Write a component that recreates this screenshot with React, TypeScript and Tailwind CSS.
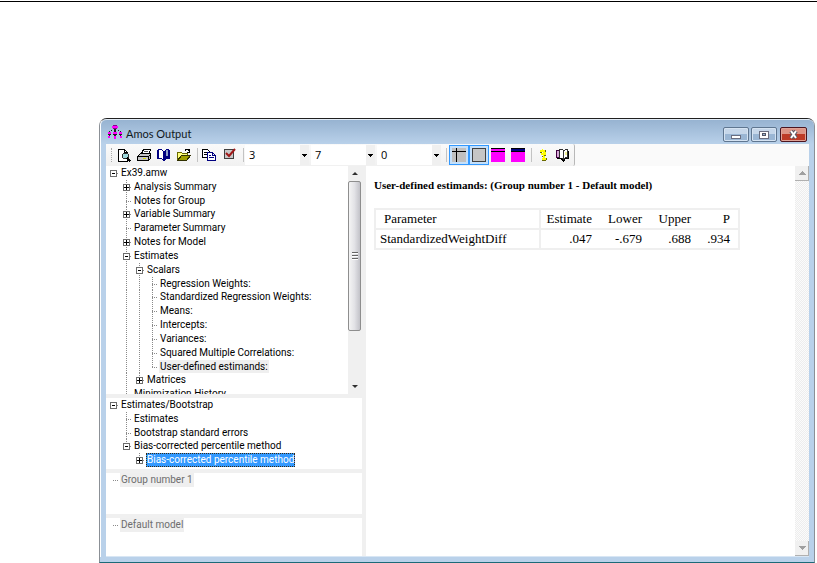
import { ReactNode } from 'react';

interface TreeItem {
  label: string;
  expander?: 'plus' | 'minus';
  state?: 'marked' | 'selected' | 'disabled';
  children?: TreeItem[];
}

interface TreeRow {
  item: TreeItem;
  depth: number;
  // one entry per ancestor level, true when the vertical guide runs through
  guides: boolean[];
  last: boolean;
}

const resultTree: TreeItem[] = [
  {
    label: 'Ex39.amw',
    expander: 'minus',
    children: [
      { label: 'Analysis Summary', expander: 'plus' },
      { label: 'Notes for Group' },
      { label: 'Variable Summary', expander: 'plus' },
      { label: 'Parameter Summary' },
      { label: 'Notes for Model', expander: 'plus' },
      {
        label: 'Estimates',
        expander: 'minus',
        children: [
          {
            label: 'Scalars',
            expander: 'minus',
            children: [
              { label: 'Regression Weights:' },
              { label: 'Standardized Regression Weights:' },
              { label: 'Means:' },
              { label: 'Intercepts:' },
              { label: 'Variances:' },
              { label: 'Squared Multiple Correlations:' },
              { label: 'User-defined estimands:', state: 'marked' },
            ],
          },
          { label: 'Matrices', expander: 'plus' },
        ],
      },
      { label: 'Minimization History' },
    ],
  },
];

const bootstrapTree: TreeItem[] = [
  {
    label: 'Estimates/Bootstrap',
    expander: 'minus',
    children: [
      { label: 'Estimates' },
      { label: 'Bootstrap standard errors' },
      {
        label: 'Bias-corrected percentile method',
        expander: 'minus',
        children: [
          { label: 'Bias-corrected percentile method', expander: 'plus', state: 'selected' },
        ],
      },
    ],
  },
];

const estimands = [
  { name: 'StandardizedWeightDiff', estimate: '.047', lower: '-.679', upper: '.688', p: '.934' },
];

const labelStyles = {
  normal: 'text-black',
  marked: 'bg-[#efefef] text-black',
  selected: 'bg-[#3399ff] text-white outline-1 -outline-offset-1 outline-dotted outline-[#3a2a10]',
  disabled: 'bg-[#efefef] text-[#6d6d6d]',
};

function flatten(items: TreeItem[], depth = 0, guides: boolean[] = []): TreeRow[] {
  return items.flatMap((item, i) => {
    const last = i === items.length - 1;
    return [
      { item, depth, guides, last },
      ...flatten(item.children ?? [], depth + 1, [...guides, depth > 0 && !last]),
    ];
  });
}

function Guide({ through }: { through: boolean }) {
  return (
    <svg width="13" height="14" shapeRendering="crispEdges" className="shrink-0" aria-hidden="true">
      {through && <path d="M6.5 0V14" stroke="#8a8a8a" strokeDasharray="1 1" />}
    </svg>
  );
}

function Joint({ row }: { row: TreeRow }) {
  const { item, depth, last } = row;
  return (
    <svg width="13" height="14" shapeRendering="crispEdges" className="shrink-0" aria-hidden="true">
      {depth > 0 && (
        <path d={last ? 'M6.5 0V7' : 'M6.5 0V14'} stroke="#8a8a8a" strokeDasharray="1 1" />
      )}
      <path d="M6 7.5H12" stroke="#8a8a8a" strokeDasharray="1 1" />
      {item.expander && (
        <>
          <rect x="3.5" y="4.5" width="6" height="6" fill="#fff" stroke="#6e6e6e" />
          <path d="M5 7.5H8" stroke="#000" />
        </>
      )}
      {item.expander === 'plus' && <path d="M4 7.5H9M6.5 5V10" stroke="#000" />}
    </svg>
  );
}

function Tree({ items, className }: { items: TreeItem[]; className: string }) {
  return (
    <ul
      className={`grid auto-rows-fr pl-px font-['Roboto','Liberation_Sans',sans-serif] text-[10px] leading-[14px] ${className}`}
    >
      {flatten(items).map((row, i) => (
        <li key={i} className="flex min-h-0">
          {row.guides.map((through, g) => (
            <Guide key={g} through={through} />
          ))}
          <Joint row={row} />
          <span className={`px-px whitespace-nowrap ${labelStyles[row.item.state ?? 'normal']}`}>
            {row.item.label}
          </span>
        </li>
      ))}
    </ul>
  );
}

function Arrow({ up = false, color }: { up?: boolean; color: string }) {
  return (
    <svg width="8" height="4" shapeRendering="crispEdges" aria-hidden="true">
      <path d={up ? 'M0 4L4 0L8 4Z' : 'M0 0H8L4 4Z'} fill={color} />
    </svg>
  );
}

function SmallArrow({ up = false }: { up?: boolean }) {
  return (
    <svg width="6" height="3" viewBox="0 0 6 3" aria-hidden="true">
      <path d={up ? 'M0 3L3 0L6 3Z' : 'M0 0H6L3 3Z'} fill="#303030" />
    </svg>
  );
}

function TreeScrollbar() {
  return (
    <div className="flex w-[14px] shrink-0 flex-col bg-[#f0f0f0]">
      <button aria-label="Scroll up" className="flex h-[15px] items-center justify-center">
        <SmallArrow up />
      </button>
      <div className="mr-px flex h-[150px] flex-col items-center justify-center gap-px rounded-xs border border-[#8e8e8e] bg-linear-to-r from-[#f4f4f4] via-[#e2e2e6] to-[#c2c2c8]">
        <span className="h-[2px] w-[6px] border-t border-[#666] bg-white" />
        <span className="h-[2px] w-[6px] border-t border-[#666] bg-white" />
        <span className="h-[2px] w-[6px] border-t border-[#666] bg-white" />
      </div>
      <button aria-label="Scroll down" className="mt-auto flex h-[15px] items-center justify-center">
        <SmallArrow />
      </button>
    </div>
  );
}

function OutputScrollbar() {
  return (
    <div className="flex w-[14px] shrink-0 flex-col bg-[#f4f4f4]">
      <button
        aria-label="Scroll up"
        className="flex h-[15px] items-center justify-center border-r border-b border-[#b0b0b0] bg-[#f0f0f0]"
      >
        <Arrow up color="#a0a0a0" />
      </button>
      <div className="flex-1 bg-[repeating-conic-gradient(#ededed_0_25%,#fbfbfb_0_50%)] bg-size-[2px_2px]" />
      <button
        aria-label="Scroll down"
        className="flex h-[15px] items-center justify-center border-r border-b border-[#b0b0b0] bg-[#f0f0f0]"
      >
        <Arrow color="#a0a0a0" />
      </button>
    </div>
  );
}

function ToolButton({ label, children }: { label: string; children: ReactNode }) {
  return (
    <button aria-label={label} className="flex h-5 w-5 shrink-0 items-center justify-center">
      <svg width="16" height="16" viewBox="0 0 16 16" shapeRendering="crispEdges" fill="none">
        {children}
      </svg>
    </button>
  );
}

function ToggleButton({ label, children }: { label: string; children: ReactNode }) {
  return (
    <button
      aria-label={label}
      aria-pressed="true"
      className="flex h-5 w-5 shrink-0 items-center justify-center border border-[#3399ff] bg-[#c4e0fb]"
    >
      <svg width="16" height="16" viewBox="0 0 16 16" shapeRendering="crispEdges" fill="none">
        {children}
      </svg>
    </button>
  );
}

function Separator() {
  return <span className="h-[14px] w-px shrink-0 bg-[#c3c3c3]" />;
}

function DigitSelect({ label, value }: { label: string; value: string }) {
  return (
    <div className="relative h-5 w-16 shrink-0 bg-white">
      <select
        aria-label={label}
        defaultValue={value}
        className="block h-5 w-full appearance-none pl-1 font-['Open_Sans','Noto_Sans',sans-serif] text-[11px] leading-5 text-black"
      >
        <option>{value}</option>
      </select>
      <span className="pointer-events-none absolute inset-y-0 right-0 flex w-[9px] items-center justify-center bg-[#f0f0f0]">
        <svg width="5" height="3" shapeRendering="crispEdges" aria-hidden="true">
          <path d="M0 0H5V1H0ZM1 1H4V2H1ZM2 2H3V3H2Z" fill="#000" />
        </svg>
      </span>
    </div>
  );
}

function AmosIcon() {
  return (
    <svg width="14" height="14" viewBox="0 0 14 14" shapeRendering="crispEdges" aria-hidden="true">
      <path d="M5 0H9V1H10V3H9V4H5V3H4V1H5Z" fill="#ff00ff" />
      <path d="M5 0H9V1H5ZM5 3H9V4H5Z" fill="#8a008a" />
      <path d="M6 4H8V7H6ZM3 5H4V6H3ZM10 5H11V6H10ZM1 6H2V7H1ZM12 6H13V7H12Z" fill="#202020" />
      <path d="M0 7H3V9H0ZM5 7H9V9H5ZM11 7H14V9H11Z" fill="#ff00ff" />
      <path d="M0 9H3V10H0ZM5 9H9V10H5ZM11 9H14V10H11ZM1 10H2V11H1ZM6 10H8V11H6ZM12 10H13V11H12Z" fill="#202020" />
      <path d="M0 11H2V13H0ZM6 11H8V14H6ZM12 11H14V13H12Z" fill="#ff00ff" />
    </svg>
  );
}

function TitleBar() {
  return (
    <header className="flex h-[25px] items-center rounded-t-md border-t border-white/60 bg-linear-to-b from-[#97b3d1] to-[#b9d1ea] px-[7px]">
      <AmosIcon />
      <h1 className="ml-1 pt-1 font-['Lato','Open_Sans',sans-serif] text-[11px] leading-[16px] text-[#101820]">
        Amos Output
      </h1>
      <div className="ml-auto flex gap-[2px] pt-[5px]">
        <button
          aria-label="Minimize"
          className="flex h-[15px] w-[26px] items-center justify-center rounded-xs border border-[#5f7690] bg-linear-to-b from-[#c6d7ea] from-50% to-[#9ab6d4] to-50% shadow-[inset_0_0_0_1px_#d5e3f2]"
        >
          <svg width="10" height="4" shapeRendering="crispEdges" className="mt-1">
            <rect x="0.5" y="0.5" width="9" height="3" fill="#fff" stroke="#6a6e80" />
          </svg>
        </button>
        <button
          aria-label="Maximize"
          className="flex h-[15px] w-[26px] items-center justify-center rounded-xs border border-[#5f7690] bg-linear-to-b from-[#c6d7ea] from-50% to-[#9ab6d4] to-50% shadow-[inset_0_0_0_1px_#d5e3f2]"
        >
          <svg width="10" height="8" shapeRendering="crispEdges">
            <rect x="0.5" y="0.5" width="9" height="7" fill="#fff" stroke="#6a6e80" />
            <rect x="3.5" y="2.5" width="3" height="2" fill="#9ab6d4" stroke="#535666" />
          </svg>
        </button>
        <button
          aria-label="Close"
          className="ml-px flex h-[15px] w-[27px] items-center justify-center rounded-xs border border-[#4b1520] bg-linear-to-b from-[#dd9486] from-50% to-[#bd3a26] to-50% shadow-[inset_0_0_0_1px_#e0a296]"
        >
          <svg width="11" height="9" viewBox="0 0 11 9">
            <path d="M3 1L8 8M8 1L3 8" stroke="#5d5a65" strokeWidth="4" />
            <path d="M3 1L8 8M8 1L3 8" stroke="#fff" strokeWidth="2" />
          </svg>
        </button>
      </div>
    </header>
  );
}

function Toolbar() {
  return (
    <div className="flex h-[22px] items-center bg-[#fafafa]">
      <div className="flex h-full items-center rounded-r-xs border-r border-[#b8b8b8] bg-linear-to-b from-[#fafafa] to-[#f1f1f1]">
        <span className="ml-[5px] h-[14px] border-l border-dotted border-[#aaa]" />
        <div className="ml-[2px] flex">
          <ToolButton label="Print preview">
            <path d="M2.5 2.5H8.5L11.5 5.5V14.5H2.5Z" fill="#fff" stroke="#000" />
            <path d="M8.5 2.5V5.5H11.5" stroke="#000" />
            <circle cx="9.5" cy="9" r="3" fill="#9fd8dc" stroke="#303030" />
            <path d="M11 11L14.5 14.5" stroke="#000" strokeWidth="2" />
          </ToolButton>
          <ToolButton label="Print">
            <path d="M5.5 6.5L7.5 2.5H14.5L12.5 7.5" fill="#fff" stroke="#000" />
            <path d="M8 4.5H12M7 6.5H11" stroke="#555" />
            <path d="M1.5 9.5L4.5 6.5H14.5V11.5L12.5 13.5H1.5Z" fill="#c6c6c6" stroke="#000" />
            <path d="M2 9.5H12.5V13M12.5 9.5L14.5 7.5" stroke="#000" />
            <path d="M7 11.5H10" stroke="#d8d800" />
            <path d="M3 13.5H12" stroke="#000" />
          </ToolButton>
          <ToolButton label="Contents">
            <path d="M1 3H2V2H6V3H7V4H9V3H10V2H13V3H14V12H10V13H9V14H7V13H6V12H1Z" fill="#000080" />
            <path d="M3 3H6V4H7V12H6V11H3Z" fill="#fff" />
            <path d="M10 3H12V9H10Z" fill="#8fa0c8" />
          </ToolButton>
          <ToolButton label="Open">
            <path d="M1.5 13.5V5.5H5.5L6.5 6.5H11.5V8.5" fill="#ffff80" stroke="#6b6b00" />
            <path d="M1.5 13.5L5.5 8.5H14.5L10.5 13.5Z" fill="#a0a000" stroke="#303000" />
            <path d="M9 3.5V2.5H12V3.5H13V4.5M13.5 2V6M11 5.5H14" stroke="#000" />
          </ToolButton>
        </div>
        <span className="w-[3px]" />
        <Separator />
        <div className="ml-px flex gap-[2px]">
          <ToolButton label="Copy">
            <path d="M1.5 2.5H6.5L8.5 4.5V10.5H1.5Z" fill="#fff" stroke="#000" />
            <path d="M3 5.5H6M3 7.5H7" stroke="#000" />
            <path d="M6.5 5.5H11.5L14.5 8.5V13.5H6.5Z" fill="#fff" stroke="#000080" />
            <path d="M11.5 5.5V8.5H14.5M8 8.5H10M8 10.5H13" stroke="#000080" />
          </ToolButton>
          <ToolButton label="Options">
            <path d="M1.5 2.5H10.5V11.5H1.5Z" fill="#c8c8c8" stroke="#404040" />
            <path d="M3 6L6 9L12 2" stroke="#a01818" strokeWidth="2" shapeRendering="auto" />
          </ToolButton>
        </div>
        <span className="w-[2px]" />
        <Separator />
        <div className="ml-px flex gap-[2px]">
          <DigitSelect label="Decimal places" value="3" />
          <DigitSelect label="Column width" value="7" />
          <DigitSelect label="Column spacing" value="0" />
        </div>
        <span className="w-[5px]" />
        <Separator />
        <div className="ml-[2px] flex">
          <ToggleButton label="Table rules">
            <path d="M1 1H15V15H1Z" fill="#c0c0c0" />
            <path d="M1 4.5H15M5.5 1V15" stroke="#000" />
          </ToggleButton>
          <ToggleButton label="Table border">
            <path d="M1.5 1.5H14.5V14.5H1.5Z" fill="#c6c6c6" stroke="#404040" />
          </ToggleButton>
          <ToolButton label="Table color">
            <path d="M0 1H14V15H0Z" fill="#ff00ff" />
            <path d="M0 1.5H14M0 4.5H14" stroke="#000" />
          </ToolButton>
          <ToolButton label="Header color">
            <path d="M0 1H14V15H0Z" fill="#ff00ff" />
            <path d="M0 2H14V4H0Z" fill="#000080" />
            <path d="M0 1.5H14M0 4.5H14" stroke="#000" />
          </ToolButton>
        </div>
        <span className="w-[2px]" />
        <Separator />
        <div className="ml-px flex">
          <ToolButton label="Help">
            <path d="M7 2H8V3H10V5H11V8H9V9H10V11H11V13H7V11H8V8H6V6H8V5H5V3H7Z" fill="#ffff00" />
            <path d="M5 5H7V6H5ZM10 3H11V5H10ZM9 8H11V9H9ZM7 9H8V10H7ZM11 11H12V13H11ZM7 13H11V14H7Z" fill="#6a6a00" />
          </ToolButton>
          <ToolButton label="Help topics">
            <path d="M1.5 3.5H4.5V10.5H1.5Z" fill="#d9a8d9" stroke="#400040" />
            <path d="M4.5 2.5H7.5L8.5 3.5V12.5L7.5 11.5H4.5Z" fill="#fff" stroke="#303030" />
            <path d="M8.5 4.5L10.5 2.5H12.5V10.5H10.5L8.5 12.5Z" fill="#fff" stroke="#303030" />
            <path d="M2 11.5H6L8.5 14L10.5 11.5H14" stroke="#000" />
            <path d="M13.5 4V12" stroke="#000" />
            <path d="M10 5H12V8H10Z" fill="#f2f29a" />
          </ToolButton>
        </div>
        <span className="w-px" />
      </div>
    </div>
  );
}

function EstimandsTable() {
  return (
    <table className="mt-[15px] border-collapse border-2 border-[#efefef] text-[13px] leading-[18px]">
      <thead>
        <tr className="border-b-2 border-[#efefef]">
          <th className="w-[165px] border-r-2 border-[#efefef] pl-2 text-left font-normal">Parameter</th>
          <th className="w-[58px] pr-[6px] text-right font-normal">Estimate</th>
          <th className="w-[50px] pr-[6px] text-right font-normal">Lower</th>
          <th className="w-[49px] pr-[6px] text-right font-normal">Upper</th>
          <th className="w-[42px] pr-[8px] text-right font-normal">P</th>
        </tr>
      </thead>
      <tbody>
        {estimands.map((row) => (
          <tr key={row.name}>
            <td className="border-r-2 border-[#efefef] pl-1">{row.name}</td>
            <td className="pr-[6px] text-right">{row.estimate}</td>
            <td className="pr-[6px] text-right">{row.lower}</td>
            <td className="pr-[6px] text-right">{row.upper}</td>
            <td className="pr-[8px] text-right">{row.p}</td>
          </tr>
        ))}
      </tbody>
    </table>
  );
}

export default function App() {
  return (
    <main className="bg-white pt-px">
      <hr className="border-t border-black" />
      <div className="pt-[116px] pr-[2px] pl-[99px]">
        <section className="rounded-t-lg border-x border-t border-b border-x-[#8b9096] border-t-[#202020] border-b-[#1c6a78] bg-[#b9d1ea]">
          <div className="rounded-t-md border-l border-white">
            <TitleBar />
            <div className="mx-[5px] mb-[5px] border-b border-[#d8e6f4]">
              <Toolbar />
              <div className="flex gap-1 bg-[#f0f0f0]">
                <div className="flex w-[256px] shrink-0 flex-col gap-1">
                  <nav className="flex h-[228px] overflow-hidden bg-white">
                    <Tree items={resultTree} className="h-[235px] flex-1" />
                    <TreeScrollbar />
                  </nav>
                  <nav className="h-[71px] bg-white">
                    <Tree items={bootstrapTree} className="h-[69px]" />
                  </nav>
                  <nav className="h-[41px] bg-white">
                    <Tree items={[{ label: 'Group number 1', state: 'disabled' }]} className="h-[14px]" />
                  </nav>
                  <nav className="h-[38px] bg-white">
                    <Tree items={[{ label: 'Default model', state: 'disabled' }]} className="h-[14px]" />
                  </nav>
                </div>
                <div className="flex min-w-0 flex-1 bg-white">
                  <article className="min-w-0 flex-1 pt-[12px] pl-2 font-['Liberation_Serif',serif] text-black">
                    <h2 className="text-[11px] leading-[15px] font-bold">
                      User-defined estimands: (Group number 1 - Default model)
                    </h2>
                    <EstimandsTable />
                  </article>
                  <OutputScrollbar />
                </div>
              </div>
            </div>
          </div>
        </section>
      </div>
    </main>
  );
}
